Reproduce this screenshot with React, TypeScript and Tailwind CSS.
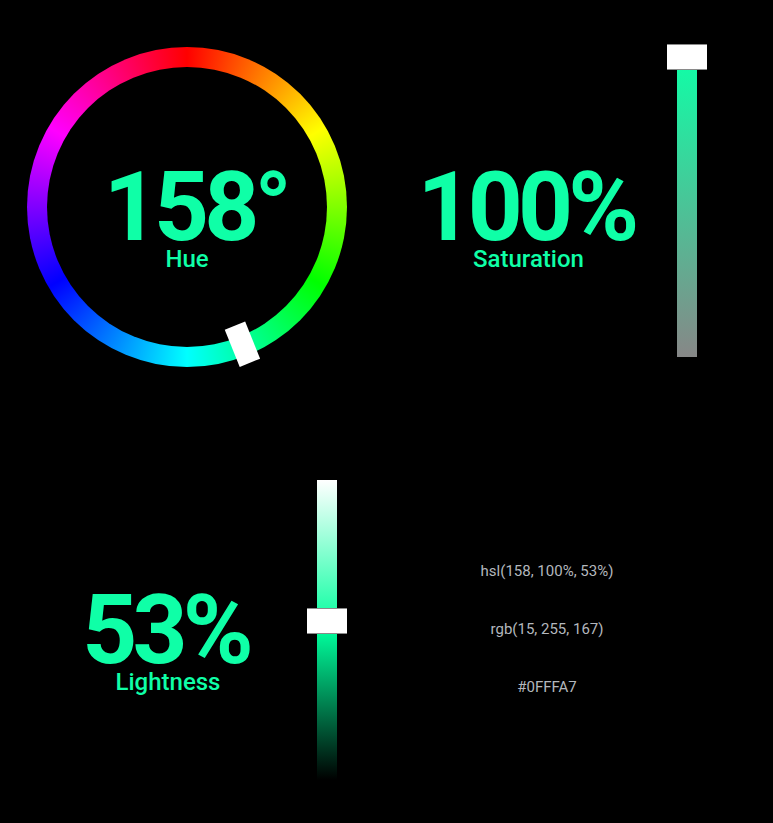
import React from 'react';

const ACCENT = 'text-[#0fffa7]';

function HueRing() {
    return (
        <div className="relative w-[320px] h-[320px] rounded-full bg-[conic-gradient(#ff0000,#ffff00,#00ff00,#00ffff,#0000ff,#ff00ff,#ff0000)]">
            <div className="absolute inset-[20px] rounded-full bg-black flex flex-col items-center pt-[100px]">
                <div className={`text-[96px] leading-[80px] font-bold tracking-tighter ${ACCENT} pl-[17px]`}>158°</div>
                <div className={`text-2xl leading-6 font-medium ${ACCENT}`}>Hue</div>
            </div>
            {/* handle, rotated to the hue angle */}
            <div className="absolute inset-0 rotate-[158deg]">
                <div className="absolute left-[149px] top-[-8px] w-[22px] h-[40px] bg-white" />
            </div>
        </div>
    );
}

function Readout({ value, label }: { value: string; label: string }) {
    return (
        <div className="flex flex-col items-center">
            <div className={`text-[96px] leading-[80px] font-bold tracking-tighter pr-[5px] ${ACCENT}`}>{value}</div>
            <div className={`text-2xl leading-6 font-medium ${ACCENT}`}>{label}</div>
        </div>
    );
}

function VerticalSlider({ gradient, value }: { gradient: string; value: number }) {
    return (
        <div className={`relative w-[20px] h-[300px] ${gradient}`}>
            <div
                className="absolute left-[-10px] w-[40px] h-[26px] bg-white border-y border-[#8a8a8a]"
                style={{ top: `${(1 - value / 100) * 300 - 13}px` }}
            />
        </div>
    );
}

export default function App() {
    return (
        <div className="min-h-screen bg-black font-['Roboto',sans-serif] overflow-hidden">
            {/* top row */}
            <div className="flex items-start pt-[47px]">
                <div className="ml-[27px]">
                    <HueRing />
                </div>
                <div className="ml-[75px] w-[213px] pt-[120px] flex justify-center">
                    <Readout value="100%" label="Saturation" />
                </div>
                <div className="ml-[42px] mt-[10px]">
                    <VerticalSlider
                        value={100}
                        gradient="bg-[linear-gradient(to_bottom,#0fffa7,#878787)]"
                    />
                </div>
            </div>

            {/* bottom row */}
            <div className="flex items-start mt-[113px]">
                <div className="ml-[80px] w-[176px] pt-[110px] flex justify-center">
                    <Readout value="53%" label="Lightness" />
                </div>
                <div className="ml-[61px]">
                    <VerticalSlider
                        value={53}
                        gradient="bg-[linear-gradient(to_bottom,#ffffff,#00ff9d_50%,#000000)]"
                    />
                </div>
                <div className="ml-[120px] w-[180px] pt-[82px] flex flex-col items-center gap-[40px] text-[15px] leading-[18px] text-[#b3b7bd]">
                    <div>hsl(158, 100%, 53%)</div>
                    <div>rgb(15, 255, 167)</div>
                    <div>#0FFFA7</div>
                </div>
            </div>
        </div>
    );
}
